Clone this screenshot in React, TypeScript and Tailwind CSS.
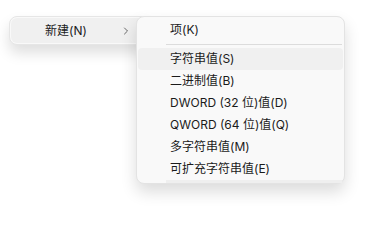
import { ChevronRight } from "lucide-react";

const items = [
  "字符串值(S)",
  "二进制值(B)",
  "DWORD (32 位)值(D)",
  "QWORD (64 位)值(Q)",
  "多字符串值(M)",
  "可扩充字符串值(E)",
];

export default function App() {
  return (
    <div
      className="relative w-[370px] h-[217px] bg-white text-[12px] text-[#1b1b1b] overflow-hidden"
      style={{ fontFamily: 'Inter, "Noto Sans CJK SC", sans-serif' }}
    >
      {/* parent menu */}
      <div className="absolute left-[9px] top-[16px] w-[140px] rounded-[8px] border border-[#e6e6e6] bg-[#f9f9f9] p-px shadow-[0_8px_14px_rgba(0,0,0,0.13)]">
        <div className="flex h-[25px] items-center rounded-[6px] bg-[#f0f0f0] pl-[34px]">
          <span className="leading-none">新建(N)</span>
          <ChevronRight className="ml-auto mr-[15px] h-[12px] w-[12px] text-[#444]" strokeWidth={1.6} />
        </div>
      </div>

      {/* submenu */}
      <div className="absolute left-[136px] top-[16px] w-[209px] rounded-[8px] border border-[#e3e3e3] bg-[#f9f9f9] px-px pt-[2px] shadow-[0_8px_16px_rgba(0,0,0,0.14)]">
        <div className="flex h-[22px] items-center pl-[32px] leading-none">项(K)</div>
        <div className="my-[3px] ml-[28px] mr-px h-px bg-[#dcdcdc]" />
        {items.map((label, i) => (
          <div
            key={label}
            className={
              i === 0
                ? "flex h-[22px] items-center rounded-[4px] bg-[#f0f0f0] pl-[32px] leading-none"
                : "flex h-[22px] items-center pl-[32px] leading-none"
            }
          >
            {label}
          </div>
        ))}
        <div className="ml-[28px] mr-px h-[3px] bg-[#efefef]" />
      </div>
    </div>
  );
}
